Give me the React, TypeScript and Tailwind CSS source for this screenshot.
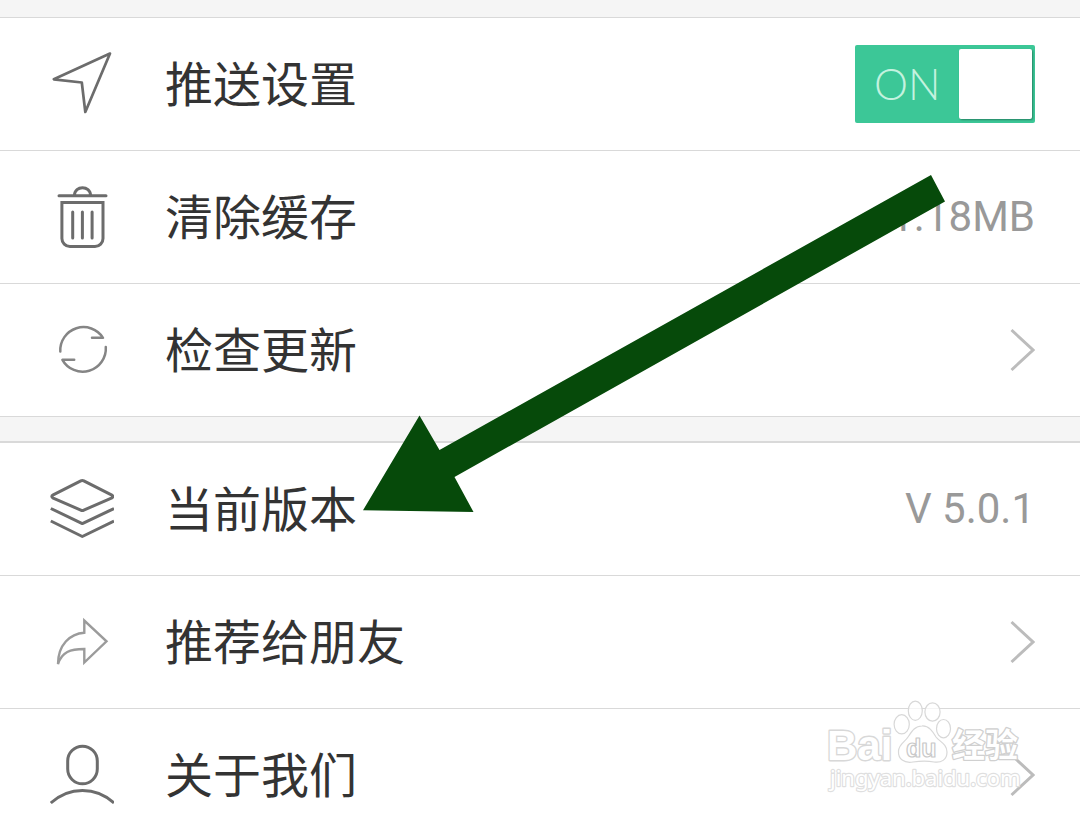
import type { ReactNode } from 'react';

function Icon({ children, tone = 'text-[#6c6c6c]' }: { children: ReactNode; tone?: string }) {
  return (
    <svg
      viewBox="0 0 64 64"
      className={`size-16 shrink-0 ${tone}`}
      fill="none"
      stroke="currentColor"
      strokeWidth="3"
      strokeLinecap="round"
      strokeLinejoin="round"
      aria-hidden="true"
    >
      {children}
    </svg>
  );
}

const SendIcon = () => (
  <Icon>
    <path strokeWidth="2.7" d="M60 1.5 3.8 27.3 31.8 30.5 35.3 60Z" />
  </Icon>
);

const TrashIcon = () => (
  <Icon>
    <path d="M9 10.7H56M24.5 10.5C24.5 0.2 40.5 0.2 40.5 10.5" />
    <path d="M11.9 17.5H53V53.5a8 8 0 0 1-8 8H19.9a8 8 0 0 1-8-8Z" strokeLinejoin="miter" />
    <path d="M22.7 27V53M32.4 27V53M42.1 27V53" />
  </Icon>
);

const RefreshIcon = () => (
  <Icon tone="text-[#858585]">
    <g strokeWidth="2.5">
      <path d="M10.3 33.500A23.2 23.2 0 0 1 53 19.800H42" />
      <path d="M55.800 29A23.2 23.2 0 0 1 12.4 41.800H24.2" />
    </g>
  </Icon>
);

const LayersIcon = () => (
  <Icon>
    <path d="M30.8 3.9Q32.3 3.1 33.8 3.9L61.4 17.9Q64.2 19.5 61.4 21.1L33.8 33.1Q32.3 33.9 30.8 33.1L3.2 21.1Q.4 19.5 3.2 17.9Z" />
    <path strokeLinecap="butt" d="M.8 31.5 32.3 46.6 64 31.5M.8 44 32.3 59.5 64 44" />
  </Icon>
);

const ShareIcon = () => (
  <Icon tone="text-[#9b9b9b]">
    <path
      strokeWidth="2.4"
      strokeLinejoin="miter"
      d="M34.3 10.5V22.7C20 23.5 8 35 8 54C12 42 20 39 34.3 39V52.5L56.5 31.3Z"
    />
  </Icon>
);

const UserIcon = () => (
  <Icon>
    <rect x="17.7" y="3.2" width="29.6" height="37.6" rx="14.8" />
    <path strokeLinecap="butt" d="M.8 60C19 43.2 46 43.2 64 60" />
  </Icon>
);

function Chevron() {
  return (
    <svg viewBox="0 0 26 44" className="h-11 w-[26px] text-[#bcbcbc]" fill="none" stroke="currentColor" strokeWidth="3" aria-hidden="true">
      <path d="M2.5 2 24 22 2.5 42" />
    </svg>
  );
}

const rowClass = 'flex h-[133px] w-full items-center gap-[51px] border-b border-[#d9d9d9] bg-white pl-[50px] pr-[45px] text-left';
const labelClass = 'flex-1 whitespace-nowrap pt-[3px] text-[48px] leading-[64px] text-[#333333]';
const valueClass = 'whitespace-nowrap text-[42px] leading-[48px] text-[#999999]';

function Row({ icon, label, children }: { icon: ReactNode; label: string; children: ReactNode }) {
  return (
    <li>
      <button type="button" className={rowClass}>
        {icon}
        <span className={labelClass}>{label}</span>
        {children}
      </button>
    </li>
  );
}

function PushRow() {
  return (
    <li>
      <label className={rowClass}>
        <SendIcon />
        <span className={labelClass}>推送设置</span>
        <input type="checkbox" role="switch" defaultChecked className="peer sr-only" />
        <span className="flex h-[78px] w-[180px] items-center justify-between rounded-xs bg-[#3cc797] pl-[19px] pr-[3px] peer-focus-visible:ring-2">
          <span className="font-[Lato,sans-serif] text-[43px] font-light leading-[48px] text-[#c3f2df]">ON</span>
          <span className="h-[70px] w-[73px] rounded-xs bg-white shadow-[1px_1px_2px_#278463]" />
        </span>
      </label>
    </li>
  );
}

function Watermark() {
  return (
    <svg
      viewBox="0 0 200 100"
      className="pointer-events-none absolute left-[825px] top-[696px] h-[100px] w-[200px]"
      fill="#ffffff"
      stroke="#d8d8d8"
      strokeWidth="1.2"
      strokeLinejoin="round"
    >
      <g fillOpacity="0.7">
        <ellipse cx="76.7" cy="28.3" rx="7.6" ry="9.6" />
        <ellipse cx="90.3" cy="14.7" rx="7" ry="9.6" />
        <ellipse cx="107.5" cy="16" rx="7.6" ry="9.2" />
        <ellipse cx="118.5" cy="32.7" rx="7" ry="9.2" />
        <path d="M97 30C104 29.500 108 36 111 41C115 46 122 48 122 56C122 64 116 67 109 66C101 64.500 95 65 88 66C79 67.500 73 63 73.500 55C74 48 80 46 83 41C87 35 90 30 97 30Z" />
      </g>
      <text x="2" y="64" fontSize="42" fontWeight="700" strokeWidth="2.8" paintOrder="stroke" className="font-['Liberation_Sans',sans-serif]">Bai</text>
      <text x="81" y="61" fontSize="25" fontWeight="700" stroke="#c9c9c9" className="font-['Liberation_Sans',sans-serif]">du</text>
      <text x="127" y="61" fontSize="33" fontWeight="700" strokeWidth="2.6" stroke="#d0d0d0" paintOrder="stroke" className="font-['Noto_Sans_CJK_SC',sans-serif]">经验</text>
      <text x="5" y="90" fontSize="22" strokeWidth="2.4" stroke="#dfdfdf" paintOrder="stroke" className="font-['Noto_Sans',sans-serif]">jingyan.baidu.com</text>
    </svg>
  );
}

function Arrow() {
  return (
    <svg viewBox="0 0 584 340" className="pointer-events-none absolute left-[362px] top-[174px] h-[340px] w-[584px]" aria-hidden="true">
      <path fill="#064a0a" d="M1 336.300 57.500 241.500 77.500 276 569 1 583 27.500 92.500 303 111.500 338Z" />
    </svg>
  );
}

export default function App() {
  return (
    <main className="relative h-screen overflow-hidden bg-[#f5f5f5] pt-[17px] font-[Roboto,'Noto_Sans_CJK_SC',sans-serif]">
      <ul className="border-t border-[#d9d9d9]">
        <PushRow />
        <Row icon={<TrashIcon />} label="清除缓存">
          <span className={valueClass}>1.18MB</span>
        </Row>
        <Row icon={<RefreshIcon />} label="检查更新">
          <Chevron />
        </Row>
      </ul>
      <ul className="mt-6 border-t-2 border-[#d9d9d9]">
        <Row icon={<LayersIcon />} label="当前版本">
          <span className={valueClass}>V 5.0.1</span>
        </Row>
        <Row icon={<ShareIcon />} label="推荐给朋友">
          <Chevron />
        </Row>
        <Row icon={<UserIcon />} label="关于我们">
          <Chevron />
        </Row>
      </ul>
      <Arrow />
      <Watermark />
    </main>
  );
}
